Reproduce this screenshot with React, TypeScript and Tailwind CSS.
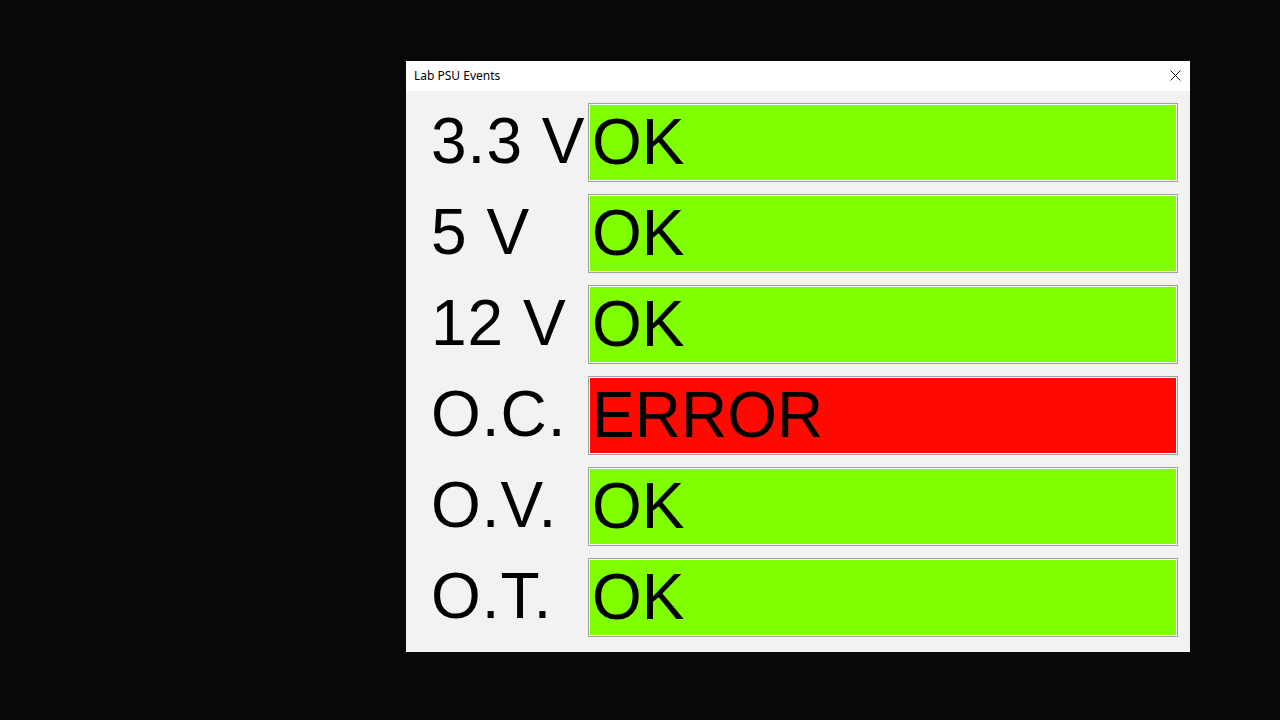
import React from "react";

const rows = [
  { label: "3.3 V", ok: true },
  { label: "5 V", ok: true },
  { label: "12 V", ok: true },
  { label: "O.C.", ok: false },
  { label: "O.V.", ok: true },
  { label: "O.T.", ok: true },
];

export default function App() {
  return (
    <div className="w-[1280px] h-[720px] bg-[#080808] pt-[61px] pl-[406px] overflow-hidden">
      <div className="w-[784px] h-[591px] flex flex-col bg-[#f2f2f2]">
        {/* title bar */}
        <div className="h-[30px] bg-white flex items-center justify-between pl-[8px] pr-[9px]">
          <span className="text-[12px] text-black font-['Noto_Sans','Open_Sans',sans-serif] leading-none">Lab PSU Events</span>
          <svg width="11" height="11" viewBox="0 0 11 11" className="mt-[-1px]">
            <path d="M0.5 0.5 L10.5 10.5 M10.5 0.5 L0.5 10.5" stroke="#111" strokeWidth="1" fill="none" />
          </svg>
        </div>

        <div className="flex flex-col gap-[12px] pt-[12px] pr-[12px]">
          {rows.map(r => (
            <div key={r.label} className="flex h-[79px] font-['Liberation_Sans',Arial,sans-serif]">
              <div className="w-[182px] pl-[25px] pt-[2px] text-[64px] leading-[1.15] tracking-[1px] text-black whitespace-nowrap">{r.label}</div>
              <div className="flex-1 border border-[#a0a0a0] bg-white p-px">
                <div className={`h-full pl-[2px] pt-px text-[64px] leading-[1.15] text-black ${r.ok ? "bg-[#7fff00]" : "bg-[#ff0a00]"}`}>
                  {r.ok ? "OK" : "ERROR"}
                </div>
              </div>
            </div>
          ))}
        </div>
      </div>
    </div>
  );
}
